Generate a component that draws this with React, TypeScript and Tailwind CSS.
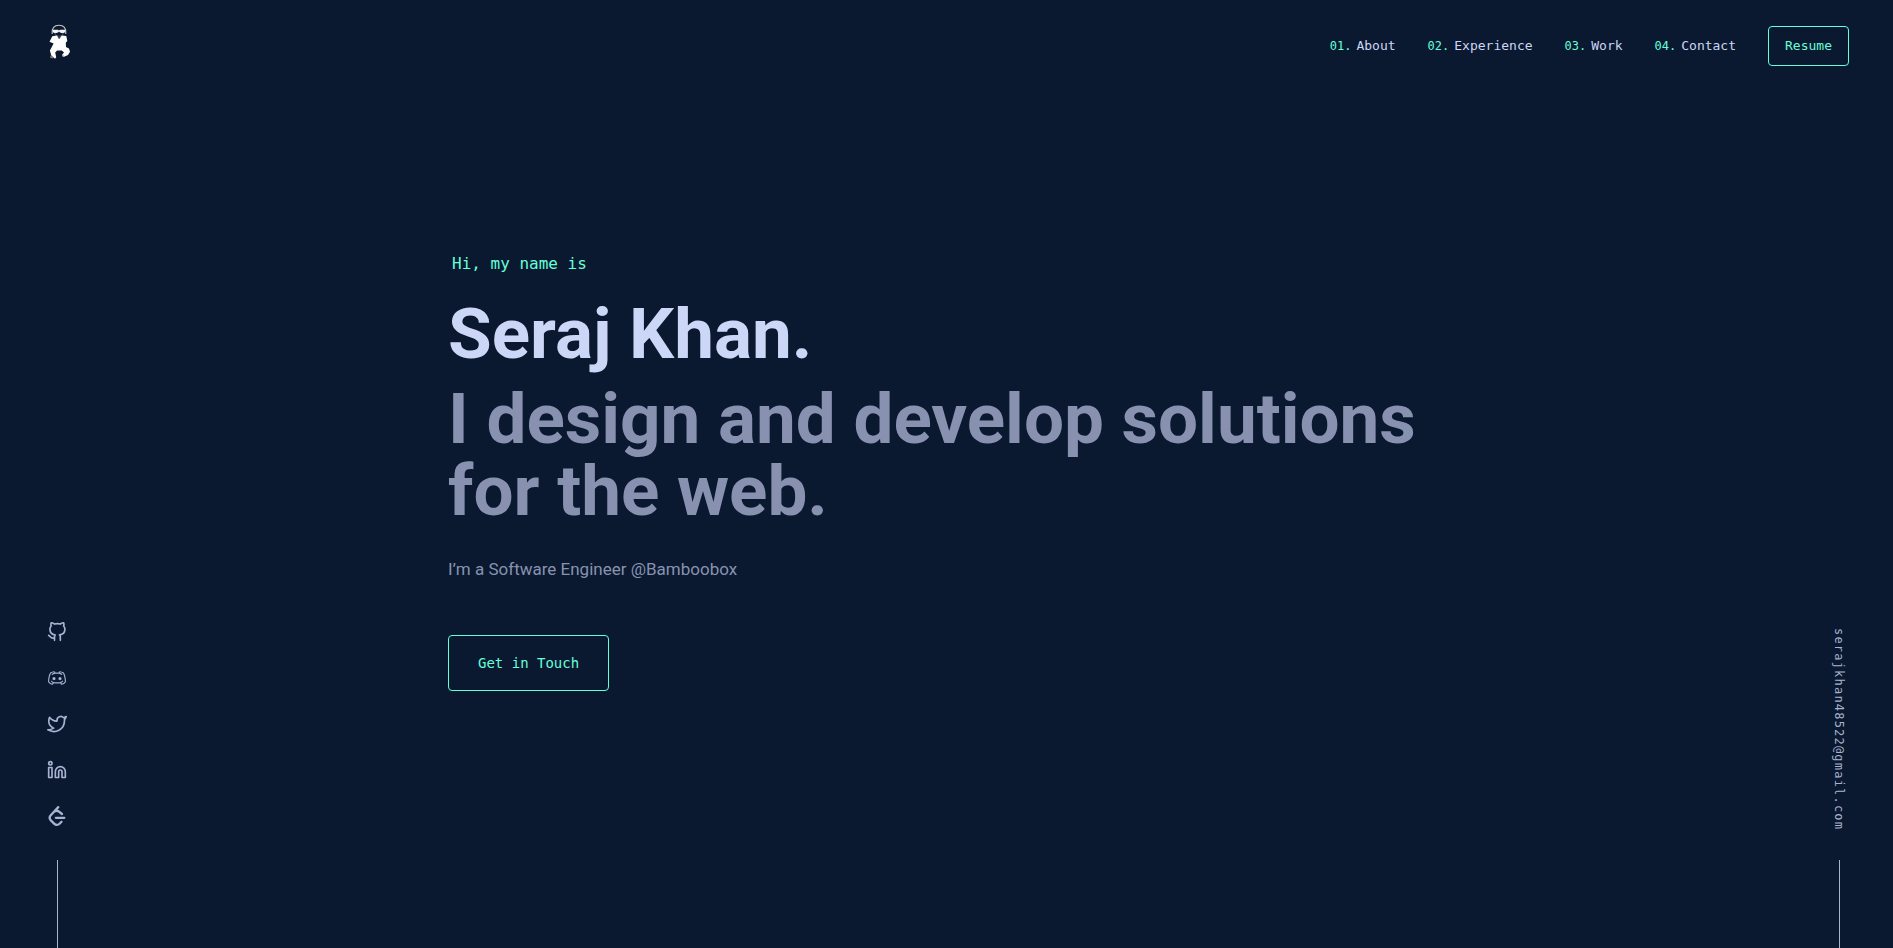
import type { ReactNode } from "react";
import { FiGithub, FiTwitter, FiLinkedin } from "react-icons/fi";
import { SiLeetcode } from "react-icons/si";
import { RxDiscordLogo } from "react-icons/rx";

const navLinks = [
  { number: "01.", label: "About", href: "#about" },
  { number: "02.", label: "Experience", href: "#experience" },
  { number: "03.", label: "Work", href: "#work" },
  { number: "04.", label: "Contact", href: "#contact" },
];

const socials: { label: string; icon: ReactNode }[] = [
  { label: "GitHub", icon: <FiGithub /> },
  { label: "Discord", icon: <RxDiscordLogo className="size-[18px]" /> },
  { label: "Twitter", icon: <FiTwitter /> },
  { label: "LinkedIn", icon: <FiLinkedin /> },
  { label: "LeetCode", icon: <SiLeetcode /> },
];

function Logo() {
  return (
    <svg viewBox="0 0 24 36" className="h-9 w-6" aria-hidden="true">
      <path d="M5.2 10C4.400 4.200 7.400 1.200 12 1.200s7.600 3 6.800 8.800" fill="none" stroke="#c3c7cd" strokeWidth="1.100" />
      <path d="M5.600 5.800h5.400l1 .7 1-.7h5.400l-.6 2.600-2.200.8-2.600-.6-1-1-1 1-2.600.6-2.200-.8z" fill="#f4f5f6" />
      <path d="M7.500 9.500q1 2.500 4.500 3 3.500-.5 4.500-3" fill="none" stroke="#4b5668" strokeWidth="1" />
      <path
        d="M5.300 12.300l4.500-.8 2.200 2 3.200-2 4.100.6 1 5-1.500 1.600.2 4.300 3 1.600 1 3.200-2 3.200-4.500 1.900-1.700-1.600 2.200-2.800-2.200-1.900h-4.700l-1.900 1.900 1 4.700-1.200 1.600-3.700-3.400-1.400-5 3.700-6.800-4.100-1.900z"
        fill="#fff"
      />
      <path d="M10.300 11.500h3.800l-1 2.800-1.300.7z" fill="#343b46" />
      <path d="M3.600 31.500l2.700 2-.9.900-2.400-.9zM15.300 30.800l2 1.300-1.800 1z" fill="#8a8173" />
    </svg>
  );
}

export default function App() {
  return (
    <div className="flex min-h-screen flex-col bg-[#0a192f] font-['Roboto',sans-serif] text-[#8892b0]">
      <header className="flex h-[92px] items-center justify-between pr-11 pl-[47px]">
        <a href="#top" aria-label="Home" className="mb-2">
          <Logo />
        </a>
        <nav className="flex items-center gap-8 font-['DejaVu_Sans_Mono',monospace] text-[13px] leading-5">
          {navLinks.map(({ number, label, href }) => (
            <a key={label} href={href} className="flex items-center gap-[5px] text-[#ccd6f6]">
              <span className="text-[12px] text-[#64ffda]">{number}</span>
              {label}
            </a>
          ))}
          <a href="#resume" className="rounded border border-[#64ffda] px-4 py-[9px] text-[#64ffda]">
            Resume
          </a>
        </nav>
      </header>

      <div className="flex flex-1 items-stretch justify-between">
        <aside className="flex w-[114px] flex-col items-center justify-end gap-[34px]" aria-label="Social links">
          <ul className="flex flex-col gap-[26px] text-[20px] text-[#a8b2d1]">
            {socials.map(({ label, icon }) => (
              <li key={label}>
                <a href={`#${label.toLowerCase()}`} aria-label={label} className="flex size-5 items-center justify-center">
                  {icon}
                </a>
              </li>
            ))}
          </ul>
          <div className="h-[88px] w-px bg-[#a8b2d1]" />
        </aside>

        <main className="w-full max-w-[1000px] pt-[158px]">
          <p className="pl-1 font-['DejaVu_Sans_Mono',monospace] text-[16px] leading-7 text-[#64ffda]">Hi, my name is</p>
          <h1 className="mt-5 text-[71px] leading-[72px] font-bold text-[#ccd6f6]">Seraj Khan.</h1>
          <h2 className="mt-[13px] text-[71px] leading-[72px] font-bold">I design and develop solutions for the web.</h2>
          <p className="mt-7 text-[17px] leading-7">I’m a Software Engineer @Bamboobox</p>
          <a
            href="#contact"
            className="mt-[52px] inline-block rounded border border-[#64ffda] px-[29px] py-[17px] font-['DejaVu_Sans_Mono',monospace] text-[14px] leading-5 text-[#64ffda]"
          >
            Get in Touch
          </a>
        </main>

        <aside className="ml-[3px] flex w-[108px] flex-col items-center justify-end gap-[30px]" aria-label="Email">
          <a
            href="mailto:serajkhan48522@gmail.com"
            className="font-['DejaVu_Sans_Mono',monospace] text-[12px] leading-5 tracking-widest text-[#a8b2d1] [writing-mode:vertical-rl]"
          >
            serajkhan48522@gmail.com
          </a>
          <div className="h-[88px] w-px bg-[#a8b2d1]" />
        </aside>
      </div>
    </div>
  );
}
